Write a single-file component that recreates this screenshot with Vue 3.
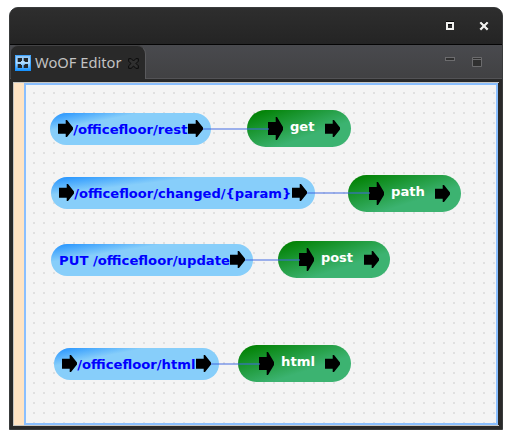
<script setup>
const routes = [
  { path: '/officefloor/rest', x: 50, y: 113, w: 161, tx: 73.2, tw: 114.3, input: true, line: 269 },
  { path: '/officefloor/changed/{param}', x: 51, y: 177, w: 264, tx: 74.2, tw: 217, input: true, line: 370 },
  { path: 'PUT /officefloor/update', x: 51, y: 244, w: 202, tx: 59, tw: 171, input: false, line: 300 },
  { path: '/officefloor/html', x: 54, y: 348, w: 165, tx: 77.2, tw: 118.3, input: true, line: 260 },
]
const handlers = [
  { name: 'get', x: 247, y: 110, w: 104, tw: 24.5 },
  { name: 'path', x: 348, y: 175, w: 113, tw: 34 },
  { name: 'post', x: 278, y: 241, w: 112, tw: 32 },
  { name: 'html', x: 238, y: 345, w: 113, tw: 34 },
]
const smallArrow = 'M0 3.7H7.7V0H9L15 7.6V9.4L9 17H7.7V13.7H0Z'
const bigArrow = 'M0 5H7.7V0H9L15 10V13L9 23H7.7V18H0Z'
</script>

<template>
  <div class="desktop">
    <main class="window">
      <header class="titlebar">
        <svg width="8" height="9" viewBox="0 0 8 9" shape-rendering="crispEdges">
          <path d="M0 .5H8M2 3.5H6" stroke="#080808" />
          <rect x="1" y="2" width="6" height="6" fill="none" stroke="#f0f0ee" stroke-width="2" />
        </svg>
        <svg width="10" height="10" viewBox="0 0 10 10">
          <path d="M1.5 .5L8.5 7.5M8.5 .5L1.5 7.5" stroke="#080808" stroke-width="2" />
          <path d="M1.3 1.2L8.7 8.6M8.7 1.2L1.3 8.6" stroke="#f0f0ee" stroke-width="2.2" />
        </svg>
      </header>
      <nav class="tabs">
        <div class="tab">
          <svg width="16" height="16" viewBox="0 0 16 16">
            <defs>
              <linearGradient id="logo" x1="0" y1="0" x2="0" y2="1">
                <stop offset="0" stop-color="#83bff5" />
                <stop offset=".45" stop-color="#b4ddff" />
                <stop offset="1" stop-color="#0b8dff" />
              </linearGradient>
            </defs>
            <rect width="16" height="16" fill="url(#logo)" />
            <path d="M.5 15.5V.5H15.5V15.5Z" fill="none" stroke="#1994ff" stroke-opacity=".65" />
            <path d="M2.7 3H7V6H6V7H2.7ZM8.7 3H13V7H9.7V6H8.7ZM2.7 9H6V10H7V13H2.7ZM9.7 9H13V13H8.7V10H9.7Z" fill="#222629" />
          </svg>
          <svg class="tab-label" width="90" height="22">
            <text x="0" y="14.5" textLength="86.5" lengthAdjust="spacingAndGlyphs">WoOF Editor</text>
          </svg>
          <svg class="tab-close" width="11" height="11" viewBox="0 0 11 11">
            <path d="M.7 .7H3.2L5.5 3L7.8 .7H10.3V3.2L8 5.5L10.3 7.8V10.3H7.8L5.5 8L3.2 10.3H.7V7.8L3 5.5L.7 3.2Z" fill="#303030" stroke="#0b0b0b" />
          </svg>
        </div>
        <div class="tools">
          <svg width="10" height="4" viewBox="0 0 10 4"><rect x=".5" y=".5" width="9" height="3" fill="#303030" stroke="#6c6c6e" /></svg>
          <svg width="10" height="10" viewBox="0 0 10 10"><path d="M.5 .5H9.5V9.5H.5ZM.5 2.5H9.5" fill="#303030" stroke="#6c6c6e" /></svg>
        </div>
      </nav>
      <section class="editor">
        <aside class="palette"></aside>
        <div class="canvas">
          <svg class="diagram" width="470" height="338" viewBox="26 85 470 338">
            <defs>
              <pattern id="dots" x="33" y="92" width="10" height="10" patternUnits="userSpaceOnUse">
                <rect width="2" height="2" fill="#e0e0e0" />
              </pattern>
              <linearGradient id="blue" x1="0" y1="0" x2="1" y2="1">
                <stop offset="0" stop-color="#1e90ff" />
                <stop offset=".28" stop-color="#87cefa" />
              </linearGradient>
              <linearGradient id="green" x1="0" y1="0" x2="1" y2="1">
                <stop offset="0" stop-color="#008000" />
                <stop offset=".05" stop-color="#008000" />
                <stop offset=".65" stop-color="#3cb371" />
              </linearGradient>
            </defs>
            <rect x="26" y="85" width="470" height="338" fill="url(#dots)" />
            <g v-for="r in routes" :key="r.path">
              <rect :x="r.x" :y="r.y" :width="r.w" height="32" rx="16" fill="url(#blue)" />
              <path v-if="r.input" :d="smallArrow" :transform="`translate(${r.x + 8} ${r.y + 7})`" />
              <text class="route" :x="r.tx" :y="r.y + 21" :textLength="r.tw" lengthAdjust="spacingAndGlyphs">{{ r.path }}</text>
              <path :d="smallArrow" :transform="`translate(${r.x + r.w - 23} ${r.y + 7})`" />
            </g>
            <g v-for="h in handlers" :key="h.name">
              <rect :x="h.x" :y="h.y" :width="h.w" height="37" rx="18.5" fill="url(#green)" />
              <path :d="bigArrow" :transform="`translate(${h.x + 21} ${h.y + 7})`" />
              <text class="handler" :x="h.x + 43" :y="h.y + 21" :textLength="h.tw" lengthAdjust="spacingAndGlyphs">{{ h.name }}</text>
              <path :d="smallArrow" :transform="`translate(${h.x + h.w - 26} ${h.y + 10})`" />
            </g>
            <path v-for="r in routes" :key="r.y" class="link" :d="`M${r.x + r.w - 8} ${r.y + 16}H${r.line}`" />
          </svg>
        </div>
      </section>
    </main>
  </div>
</template>

<style>
body { background: #fff; overflow: hidden; }
</style>

<style scoped>
svg { display: block; flex: none; }
.desktop { box-sizing: border-box; width: 512px; height: 439px; padding: 7px 9px 9px; }
.window { box-sizing: border-box; display: flex; flex-direction: column; width: 494px; height: 423px; border: 1px solid #393b3c; border-radius: 9px 9px 0 0; background: #292929; overflow: hidden; }
.titlebar { box-sizing: border-box; display: flex; justify-content: flex-end; gap: 25px; height: 37px; padding: 13px 13px 0 0; background: linear-gradient(#2e2e2e, #242424); border-bottom: 1px solid #050505; }
.tabs { box-sizing: border-box; display: flex; justify-content: space-between; height: 34px; padding-left: 1px; background: linear-gradient(#494a4e, #414143); border-bottom: 1px solid #535356; }
.tab { box-sizing: border-box; display: flex; width: 135px; height: 34px; padding: 9px 0 0 4px; border-top: 1px solid #434345; border-right: 1px solid #5a5a5d; border-radius: 7px 9px 0 0; background: #292929; }
.tab-label { margin-left: 4px; margin-top: -2px; overflow: visible; }
.tab-label text { font: 14.5px "Noto Sans", sans-serif; fill: #c2c2c2; }
.tab-close { margin: 3px 0 0 3px; }
.tools { display: flex; gap: 17px; padding: 12px 20px 0 0; }
.editor { box-sizing: border-box; display: flex; width: 486px; height: 344px; margin: 3px 0 0 3px; border: 1px solid #c8c7c3; border-right: 0; }
.palette { width: 10px; background: #ffe4c4; }
.canvas { box-sizing: border-box; width: 474px; height: 342px; border: 2px solid #8abfff; background: #f4f4f4; }
.diagram text { font: bold 13px "DejaVu Sans", sans-serif; }
.diagram .route { fill: #0000ff; }
.diagram .handler { fill: #fff; }
.link { stroke: #4169e1; stroke-opacity: .5; stroke-width: 2; }
</style>
